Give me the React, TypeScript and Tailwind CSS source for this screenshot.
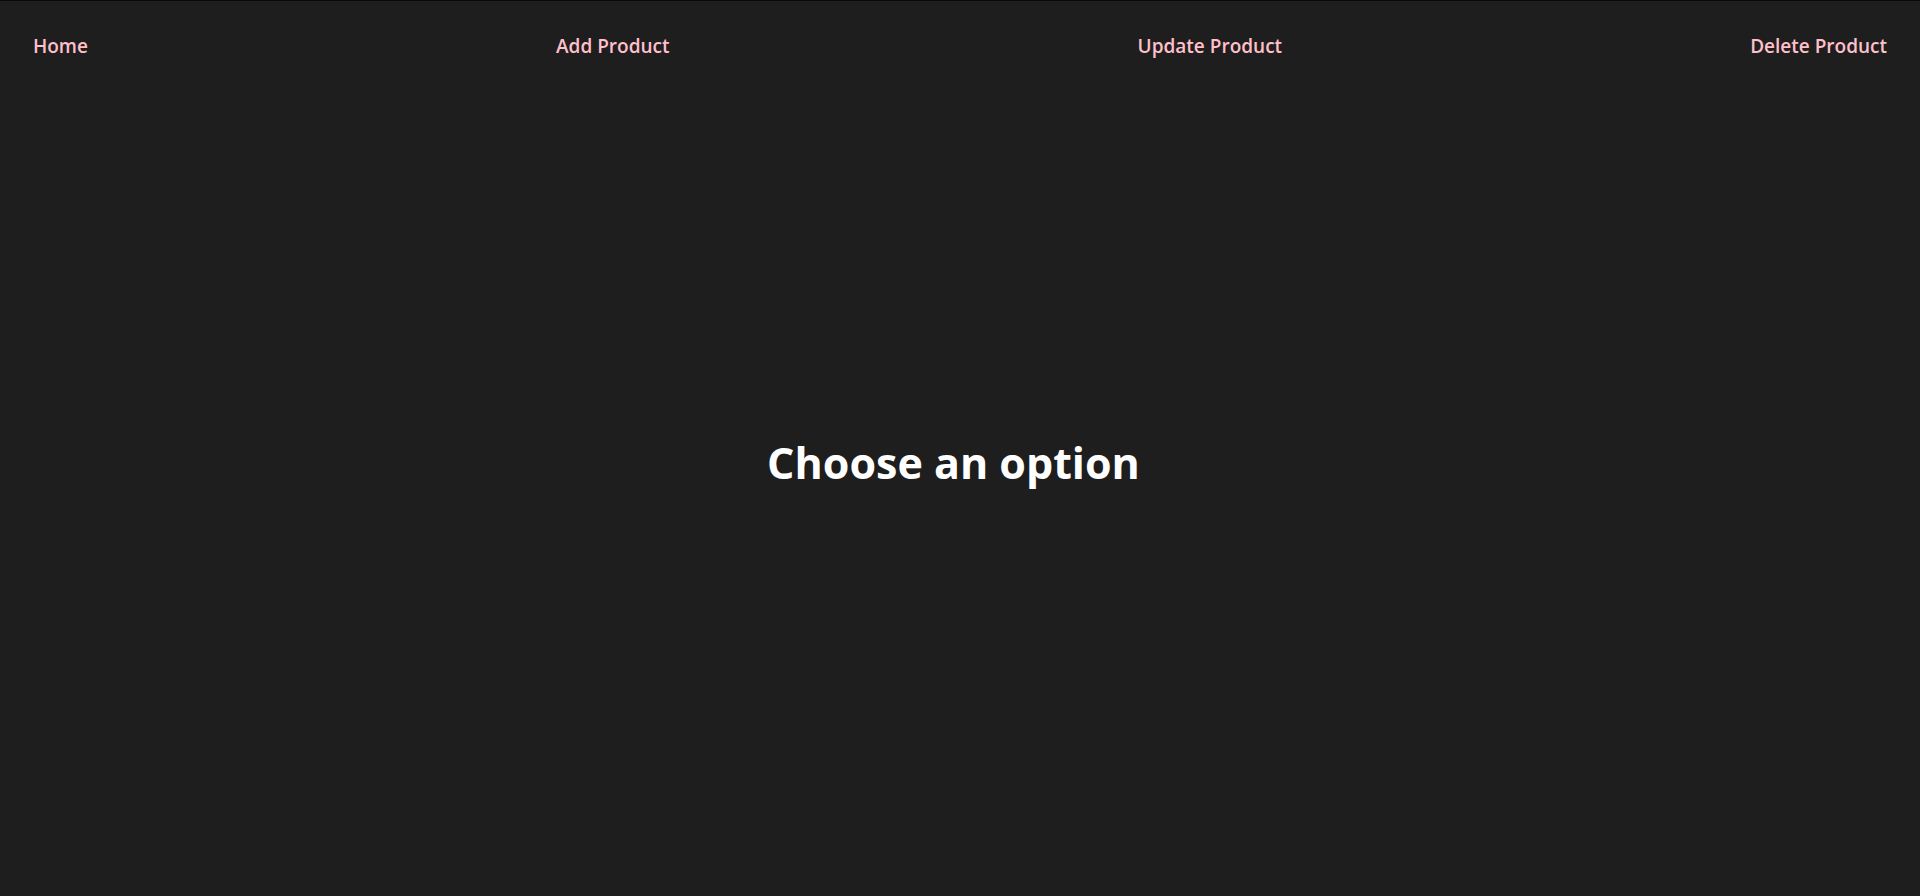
const links = ['Home', 'Add Product', 'Update Product', 'Delete Product'];

export default function App() {
  return (
    <div
      className="flex h-[896px] flex-col border-t border-[#0a0a0a] bg-[#1e1e1e]"
      style={{ fontFamily: '"Open Sans", "Noto Sans", sans-serif' }}
    >
      <nav className="flex items-center justify-between px-[33px] pt-[31px]">
        {links.map((l) => (
          <a key={l} href="#" className="text-[19px] font-semibold leading-[28px] text-[#ffc0cb]">
            {l}
          </a>
        ))}
      </nav>
      <main className="flex justify-center pr-[13px] pt-[375px]">
        <h1 className="text-[43px] font-bold leading-[56px] text-white">Choose an option</h1>
      </main>
    </div>
  );
}
